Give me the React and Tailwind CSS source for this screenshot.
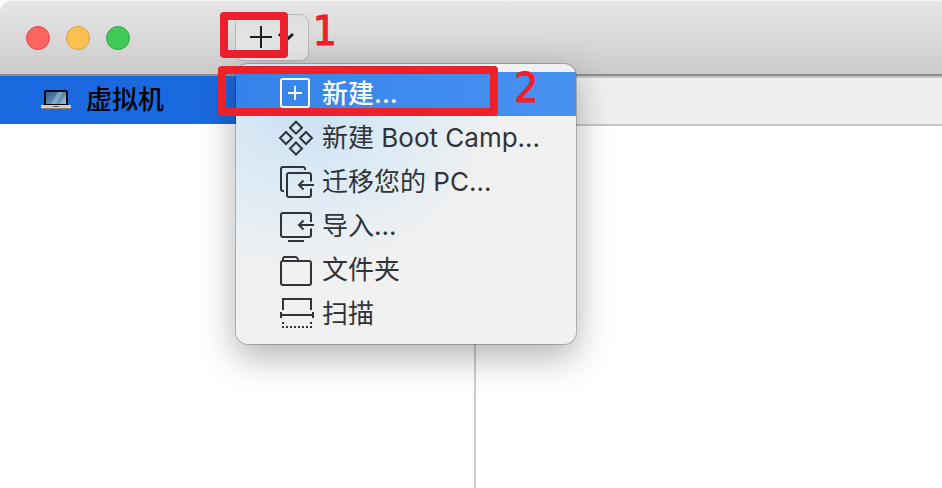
import { useState } from 'react'

const MENU_ITEMS = [
  { id: 'new',      label: '新建...',           Icon: NewIcon },
  { id: 'bootcamp', label: '新建 Boot Camp...', Icon: BootCampIcon },
  { id: 'migrate',  label: '迁移您的 PC...',     Icon: MigrateIcon },
  { id: 'import',   label: '导入...',           Icon: ImportIcon },
  { id: 'folder',   label: '文件夹',            Icon: FolderIcon },
  { id: 'scan',     label: '扫描',              Icon: ScanIcon },
]

function MenuIcon({ children }) {
  return (
    <svg viewBox="0 0 36 44" className="w-9 h-11 shrink-0" fill="none" stroke="currentColor" strokeWidth="2" aria-hidden="true">
      {children}
    </svg>
  )
}

function NewIcon() {
  return (
    <MenuIcon>
      <rect x="3" y="7" width="28" height="28" rx="2" />
      <path d="M10 21h14M17 14v14" />
    </MenuIcon>
  )
}

function BootCampIcon() {
  return (
    <MenuIcon>
      <path d="M18 5.7l6 6-6 6-6-6zM8 16l6 6-6 6-6-6zM28 16l6 6-6 6-6-6zM18 26.5l6 6-6 6-6-6z" />
    </MenuIcon>
  )
}

function MigrateIcon() {
  return (
    <MenuIcon>
      <path d="M6 31H5a2 2 0 0 1-2-2V9a2 2 0 0 1 2-2h20a2 2 0 0 1 2 2v1" />
      <path d="M33 21.5V15a2 2 0 0 0-2-2H11a2 2 0 0 0-2 2v20a2 2 0 0 0 2 2h20a2 2 0 0 0 2-2v-6.5" />
      <path d="M36 25H21M25.5 20.5L21 25l4.500 4.500" />
    </MenuIcon>
  )
}

function ImportIcon() {
  return (
    <MenuIcon>
      <path d="M33 18V11a2 2 0 0 0-2-2H5a2 2 0 0 0-2 2v20a2 2 0 0 0 2 2h26a2 2 0 0 0 2-2v-6.500" />
      <path d="M36 21H21M25.5 16.500L21 21l4.500 4.500M10 37h16" />
    </MenuIcon>
  )
}

function FolderIcon() {
  return (
    <MenuIcon>
      <rect x="3" y="13" width="30" height="24" rx="2" />
      <path d="M5 13v-2q0-2 2-2h10q2 0 2.500 1.500L20.500 13" />
    </MenuIcon>
  )
}

function ScanIcon() {
  return (
    <MenuIcon>
      <path d="M5 18V7h28v11M3 20v6M35 20v6M3 23h32" />
      <path d="M4 35h30" strokeDasharray="2 2" />
      <path d="M4 31h2M32 31h2" />
    </MenuIcon>
  )
}

function LaptopIcon() {
  return (
    <svg viewBox="0 0 30 22" className="w-[30px] h-[22px] shrink-0" aria-hidden="true">
      <defs>
        <linearGradient id="screen" x1="0" y1="0" x2="1" y2="1">
          <stop offset="0" stopColor="#2d5f8f" />
          <stop offset="1" stopColor="#7fabc8" />
        </linearGradient>
      </defs>
      <rect x="3" y="1" width="24" height="16" rx="1.500" fill="#080b10" />
      <rect x="5" y="3" width="20" height="12" fill="url(#screen)" />
      <path d="M17 3h5l-7 12h-5zM25 6v9h-6z" fill="#a5c6da" opacity="0.5" />
      <rect x="0" y="16" width="30" height="3" fill="#d3d0ca" />
      <rect x="12" y="17" width="6" height="1" fill="#6c6a66" />
      <rect x="0" y="19" width="30" height="1" fill="#85827c" />
    </svg>
  )
}

function AddMenu({ selected, onSelect }) {
  return (
    <div
      role="menu"
      className="absolute left-0 top-[49px] z-10 w-[340px] py-2 rounded-xl ring-1 ring-black/20 bg-[#f1f1f1] bg-[radial-gradient(ellipse_at_20%_12%,#c8e0f3_0%,#dceaf5_24%,#f1f1f1_52%)] shadow-[0_12px_36px_rgba(0,0,0,0.32)]"
    >
      {MENU_ITEMS.map(({ id, label, Icon }) => (
        <button
          key={id}
          type="button"
          role="menuitem"
          onClick={() => onSelect(id)}
          className={
            selected === id
              ? 'flex w-full h-11 items-center gap-2 pl-[42px] text-left font-medium text-white bg-linear-to-r from-[#3583ea] to-[#4891f1]'
              : 'flex w-full h-11 items-center gap-2 pl-[42px] text-left text-[#303438]'
          }
        >
          <Icon />
          <span className="text-[26px] leading-10 whitespace-nowrap">{label}</span>
        </button>
      ))}

      {/* step 2 */}
      <div className="pointer-events-none absolute -left-[18px] top-0.5 w-[280px] h-[50px] border-8 border-[#ec212c] rounded-sm" />
      <span className="pointer-events-none absolute left-[278px] top-0 font-['DejaVu_Sans_Mono',monospace] text-[40px] leading-[48px] text-[#ec212c] [-webkit-text-stroke:1px_#ec212c]">2</span>
    </div>
  )
}

export default function App() {
  const [open, setOpen] = useState(true)
  const [selected, setSelected] = useState('new')

  return (
    <div className="min-h-screen flex flex-col bg-white overflow-hidden rounded-tl-xl font-[Inter,'Noto_Sans_CJK_SC',sans-serif]">
      {/* Title bar */}
      <header className="flex h-[76px] items-center pl-[26px] border-t border-t-[#f4f4f4] border-b-2 border-b-[#8f8f8f] bg-linear-to-b from-[#e6e6e6] to-[#cccccc] rounded-tl-xl">
        <div className="flex gap-4">
          <button type="button" aria-label="关闭" className="size-6 rounded-full bg-[#fc6460] border border-[#e04a48]" />
          <button type="button" aria-label="最小化" className="size-6 rounded-full bg-[#fdbf50] border border-[#dea03c]" />
          <button type="button" aria-label="缩放" className="size-6 rounded-full bg-[#3fca55] border border-[#2dab40]" />
        </div>

        <div className="relative ml-[106px]">
          <button
            type="button"
            aria-label="添加"
            aria-expanded={open}
            onClick={() => setOpen(o => !o)}
            className="block w-[72px] h-[45px] rounded-lg bg-linear-to-b from-[#dedede] to-[#e8e8e8] ring-1 ring-[#b9b9b9] shadow-sm"
          >
            <svg viewBox="0 0 72 45" className="w-[72px] h-[45px]" fill="none" stroke="#1c1c1c" aria-hidden="true">
              <path d="M14 22h22M25 11v22" strokeWidth="2" />
              <path d="M43 19l7 6.500 7-6.500" strokeWidth="3" />
            </svg>
          </button>
          {open && <AddMenu selected={selected} onSelect={setSelected} />}

          {/* step 1 */}
          <div className="pointer-events-none absolute -left-4 -top-[3px] w-[68px] h-[46px] border-8 border-[#ec212c] rounded-sm" />
          <span className="pointer-events-none absolute left-[76px] -top-2 font-['DejaVu_Sans_Mono',monospace] text-[40px] leading-[48px] text-[#ec212c] [-webkit-text-stroke:1px_#ec212c]">1</span>
        </div>
      </header>

      <div className="flex flex-1">
        {/* Sidebar */}
        <aside className="w-[476px] shrink-0 border-r-2 border-[#cdcdcd]">
          <a href="#vms" className="flex h-12 items-center gap-[15px] pl-[41px] bg-[#1a69de] text-black">
            <LaptopIcon />
            <span className="text-[26px] leading-10 font-medium">虚拟机</span>
          </a>
        </aside>

        <main className="flex-1 min-w-0">
          <div className="h-[50px] bg-[#efefef] border-y-2 border-[#c6c6c6]" />
        </main>
      </div>
    </div>
  )
}
